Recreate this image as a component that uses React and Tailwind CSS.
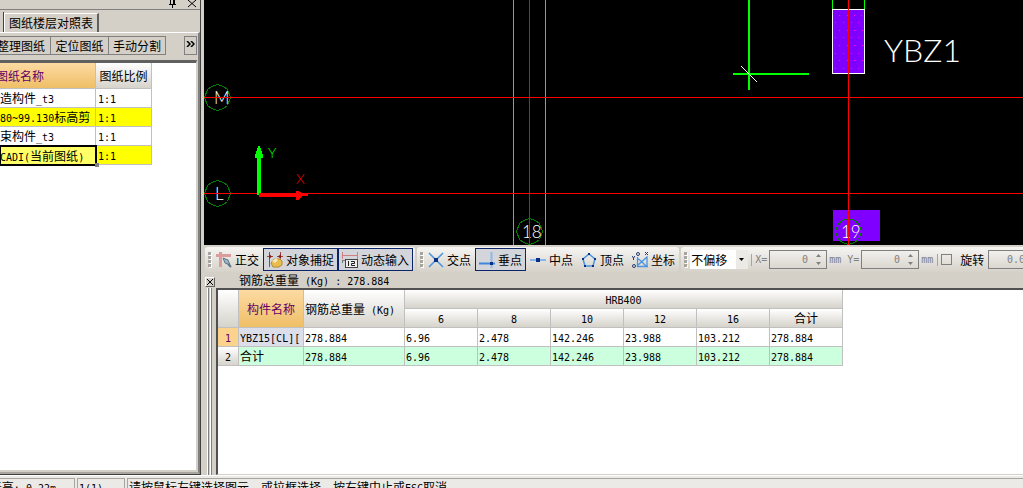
import { useState } from "react";

const drawings = [
  { name: "造构件_t3", scale: "1:1" },
  { name: "80~99.130标高剪", scale: "1:1", marked: true },
  { name: "束构件_t3", scale: "1:1" },
  { name: "CADI(当前图纸)", scale: "1:1", marked: true, current: true },
];

const diameters = ["6", "8", "10", "12", "16", "合计"];

const rows = [
  { name: "YBZ15[CL][", values: ["278.884", "6.96", "2.478", "142.246", "23.988", "103.212", "278.884"] },
  { name: "合计", total: true, values: ["278.884", "6.96", "2.478", "142.246", "23.988", "103.212", "278.884"] },
];

const hatch = [
  [12, 15], [20, 15], [27, 15], [34, 15],
  [8, 22], [16, 22], [24, 22], [31, 22],
  [12, 30], [20, 30], [27, 30], [35, 30],
  [8, 37], [16, 37], [24, 37], [31, 37],
  [12, 45], [20, 45], [27, 45], [35, 45],
  [8, 53], [16, 53], [24, 53], [31, 53],
  [12, 60], [20, 60], [27, 60], [35, 60],
  [8, 68], [16, 68], [24, 68], [31, 68],
];

// Latin characters take half the width of a Chinese one
const Mixed = ({ children }) =>
  children.split(/([\x20-\x7e]+)/).map((part, i) =>
    /^[\x20-\x7e]/.test(part) ? (
      <span key={i} className="font-['DejaVu_Sans_Mono',monospace] text-[10px] leading-none whitespace-pre">{part}</span>
    ) : (
      part
    )
  );

const AxisBubble = ({ cx, cy, label, tx }) => (
  <g>
    <polygon
      points="0,-13 6,-11 10,-8 13,0 10,8 6,11 0,13 -6,11 -10,8 -13,0 -10,-8 -6,-11"
      transform={`translate(${cx} ${cy})`}
      fill="none"
      stroke="#007f00"
    />
    <text x={tx} y={cy + 6} fill="#fff" className="font-['Lato',sans-serif] text-[17px] font-light">{label}</text>
  </g>
);

const CadView = () => (
  <svg className="block w-full h-[245px] bg-black shrink-0" shapeRendering="crispEdges">
    {/* Walls and axes */}
    <path d="M309.5 0V245M341.5 0V245M628.5 0V9M660.5 0V9" stroke="#00ff00" />
    <rect x="629" y="210" width="47" height="31" fill="#7f00ff" />
    <AxisBubble cx={13.5} cy={97.5} label="M" tx={10} />
    <AxisBubble cx={13.5} cy={193.5} label="L" tx={11} />
    <AxisBubble cx={325.5} cy={231.5} label="18" tx={318} />
    <AxisBubble cx={644.5} cy={231.5} label="19" tx={637} />

    {/* Column */}
    <rect x="628.5" y="9.5" width="32" height="64" fill="#7f00ff" stroke="#fff" />
    {hatch.map(([x, y]) => (
      <rect key={`${x}-${y}`} x={x + 623} y={y} width="1" height="1" fill="#ff00ff" />
    ))}
    <text x="680" y="62" fill="#fff" className="font-['Lato',sans-serif] text-[32px] font-light">YBZ1</text>

    <path d="M325.5 0V245M644.5 0V245" stroke="#ff0000" />
    <line x1="0" x2="100%" y1="97.5" y2="97.5" stroke="#ff0000" />
    <line x1="0" x2="100%" y1="193.5" y2="193.5" stroke="#ff0000" />

    {/* Cursor */}
    <path d="M545 0V90M529 74H605" stroke="#00ff00" strokeWidth="2" />
    <path d="M537 66L553 82" stroke="#fff" />

    {/* Coordinate system */}
    <path d="M53 195V158H51V155L54 147V146H56V147L59 155V158H57V195Z" fill="#00ff00" />
    <path d="M55 193H92V191H94L98 193H104V196H98L94 200H92V197H55Z" fill="#ff0000" />
    <text x="64" y="158" fill="#00ff00" className="font-['Lato',sans-serif] text-[14px] font-light">Y</text>
    <text x="92" y="184" fill="#ff0000" className="font-['Lato',sans-serif] text-[14px] font-light">X</text>
  </svg>
);

const Grip = () => (
  <svg width="4" height="16" className="shrink-0">
    {[0, 4, 8, 12].map((y) => (
      <g key={y}>
        <rect x="1" y={y + 1} width="3" height="3" fill="#fff" />
        <rect x="0" y={y} width="3" height="3" fill="#a8a59e" />
      </g>
    ))}
  </svg>
);

const OrthoIcon = () => (
  <svg width="16" height="16">
    <path d="M0 3.5H15M4.5 0V15" stroke="#dc9c9c" strokeWidth="3" />
    <path d="M7 6L12 8L14 13L9 11Z" fill="#9fb4c4" stroke="#5b7688" />
    <path d="M12 12L15 15" stroke="#5b7688" strokeWidth="2" />
  </svg>
);

const SnapIcon = () => (
  <svg width="16" height="16">
    <path d="M2.5 0V15M13.5 0V6M0 4.5H6M10 4.5H16" stroke="#9a4a42" />
    <path d="M2 2L5 4.5L2 7Z M14 2L11 4.5L14 7Z" fill="#8a1c1c" />
    <path d="M4 11L7 7H13L15 9V13L12 15H6Z" fill="#e8bd4c" stroke="#b58a2a" />
    <path d="M5 9L9 6L11 8L8 11Z" fill="#f6e7bb" />
  </svg>
);

const DynamicIcon = () => (
  <svg width="16" height="16">
    <path d="M0.5 0V7M15.5 0V7M0 3.5H16" stroke="#d08080" />
    <path d="M0 8.5H3M0.500 8V11" stroke="#777" />
    <rect x="3.5" y="7.5" width="12" height="8" fill="#eee" stroke="#444" />
    <path d="M6.500 9V14M9 9.500H12.500V11.500H9.500V13.500H13" fill="none" stroke="#222" />
  </svg>
);

const CrossIcon = () => (
  <svg width="16" height="16">
    <path d="M1 1L15 15M15 1L1 15" stroke="#4a94e0" strokeWidth="1.500" />
    <rect x="6" y="6" width="4" height="4" fill="#0c2f86" />
  </svg>
);

const PerpIcon = () => (
  <svg width="16" height="16">
    <path d="M12.500 0V16" stroke="#8fb8e6" strokeWidth="2" />
    <path d="M0 11.500H16" stroke="#3d86dc" strokeWidth="2" />
    <rect x="11" y="10" width="3" height="3" fill="#0c2f86" />
  </svg>
);

const MidIcon = () => (
  <svg width="16" height="16">
    <path d="M0 8H16" stroke="#86b6ea" strokeWidth="2" />
    <rect x="6" y="6" width="4" height="4" fill="#0c2f86" />
  </svg>
);

const VertexIcon = () => (
  <svg width="16" height="16">
    <path d="M8 2L14 7L12 14H4L2 7Z" fill="none" stroke="#4a94e0" strokeWidth="1.500" />
    <path d="M7 1h2v2H7zM1 6h2v2H1zM13 6h2v2h-2zM3 13h2v2H3zM11 13h2v2h-2z" fill="#0c2f86" />
  </svg>
);

const CoordIcon = () => (
  <svg width="16" height="16">
    <path d="M5.500 5V14.500H16M5 6L9 9L14 14M6 13L15 5V14" fill="none" stroke="#4a94e0" strokeWidth="1.300" />
    <path d="M0 4L1.500 6L3 4M1.500 6V8M13 0L16 3M16 0L13 3" stroke="#223c70" fill="none" />
    <circle cx="6" cy="2" r="1.500" fill="none" stroke="#223c70" />
    <circle cx="2" cy="14" r="1.500" fill="none" stroke="#223c70" />
  </svg>
);

const ToolButton = ({ icon, label, active }) => (
  <button
    className={`flex items-center gap-[3px] h-[23px] px-[3px] border ${
      active ? "border-[#0a246a] bg-[#d4d5da]" : "border-transparent"
    }`}
  >
    {icon}
    <span>{label}</span>
  </button>
);

const ToolGroup = ({ children, grow }) => (
  <div
    className={`flex items-center h-[25px] pl-[3px] rounded-[3px] bg-linear-to-b from-[#f6f5f3] to-[#d6d2ca] shrink-0 ${
      grow ? "grow" : ""
    }`}
  >
    <Grip />
    {children}
  </div>
);

const NumberBox = ({ id, label, unit, value, width }) => (
  <>
    {label && (
      <label htmlFor={id} className="w-4 pl-[2px] font-['DejaVu_Sans_Mono',monospace] text-[10px] text-[#808080]">{label}</label>
    )}
    <span className={`flex items-center h-[19px] border border-[#808080] shrink-0 ${width}`}>
      <input
        id={id}
        aria-label={label ? undefined : "旋转角度"}
        defaultValue={value}
        disabled
        className="min-w-0 flex-1 text-right font-['DejaVu_Sans_Mono',monospace] text-[10px] text-[#808080]"
      />
      <svg width="18" height="15" className="shrink-0">
        <path d="M8 5L10.500 2L13 5ZM8 10L10.500 13L13 10Z" fill="#808080" />
      </svg>
    </span>
    {unit && <span className="w-[18px] pl-[2px] font-['DejaVu_Sans_Mono',monospace] text-[10px] text-[#808080]">{unit}</span>}
  </>
);

const SnapToolbar = () => {
  const [offset, setOffset] = useState("不偏移");

  return (
    <div className="flex gap-[2px] pt-[2px] pl-px shrink-0 overflow-hidden">
      <ToolGroup>
        <div className="flex pr-[2px]">
          <ToolButton icon={<OrthoIcon />} label="正交" />
          <ToolButton icon={<SnapIcon />} label="对象捕捉" active />
          <ToolButton icon={<DynamicIcon />} label="动态输入" active />
        </div>
      </ToolGroup>
      <ToolGroup>
        <div className="flex">
          <ToolButton icon={<CrossIcon />} label="交点" />
          <ToolButton icon={<PerpIcon />} label="垂点" active />
          <ToolButton icon={<MidIcon />} label="中点" />
          <ToolButton icon={<VertexIcon />} label="顶点" />
          <ToolButton icon={<CoordIcon />} label="坐标" />
        </div>
      </ToolGroup>
      <ToolGroup grow>
        <div className="relative ml-[2px] w-[58px] h-[19px] bg-white">
          <select
            aria-label="偏移方式"
            value={offset}
            onChange={(e) => setOffset(e.target.value)}
            className="block w-full h-full pl-px appearance-none"
          >
            <option>不偏移</option>
            <option>正交偏移</option>
            <option>极轴偏移</option>
          </select>
          <svg width="12" height="19" className="absolute right-0 top-0 bg-[#eceae6] pointer-events-none">
            <path d="M3 8H8L5.500 11Z" fill="#000" />
          </svg>
        </div>
        <span className="w-px h-3 ml-[3px] mr-px bg-[#a8a59e]" />
        <NumberBox id="offset-x" label="X=" unit="mm" value="0" width="w-[58px]" />
        <NumberBox id="offset-y" label="Y=" unit="mm" value="0" width="w-[58px]" />
        <span className="w-px h-3 mr-[3px] bg-[#a8a59e]" />
        <label className="flex items-center gap-2 pr-1 shrink-0">
          <input type="checkbox" className="appearance-none w-[11px] h-[11px] border border-[#808080]" />
          旋转
        </label>
        <NumberBox id="rotate" value="0.000" width="w-[68px]" />
      </ToolGroup>
    </div>
  );
};

const headCell = "border-r border-b border-[#c0c0c0] bg-linear-to-b from-white to-[#d6d3cb] font-normal p-0";
const keyCell = "border-r border-b border-[#c0c0c0] bg-linear-to-b from-[#fcdaa2] to-[#efbf66] text-[#660066] font-normal p-0";

const DrawingPanel = () => (
  <aside className="w-[201px] shrink-0 flex flex-col border-r border-b border-[#404040]">
    {/* Title bar */}
    <div className="h-[10px] shrink-0 border-b border-[#808080] flex justify-end gap-3 pr-1 overflow-hidden">
      <button aria-label="固定" className="h-2">
        <svg width="7" height="8" className="block"><path d="M1.500 0V4M4.500 0V4M5.500 0V4M0 4.500H7M3.500 5V8" stroke="#000" /></svg>
      </button>
      <button aria-label="关闭" className="h-2">
        <svg width="8" height="8" className="block"><path d="M0 0L8 7M8 0L0 7" stroke="#000" /></svg>
      </button>
    </div>

    {/* Tabs */}
    <div className="flex items-end h-[22px] shrink-0">
      <div className="w-1 h-5 border-r border-[#404040]" />
      <button className="h-[19px] w-[95px] border-l border-t border-l-white border-t-white border-r-2 border-r-[#606060] whitespace-nowrap">
        图纸楼层对照表
      </button>
    </div>

    <div className="flex-1 min-h-0 flex flex-col border-t border-t-white border-r-2 border-r-[#808080] border-b-2 border-b-[#a8a59e]">
      <div className="flex h-[27px] pt-[3px] shrink-0">
        <button className="flex justify-end w-[51px] h-[19px] pr-[5px] border border-l-0 border-[#808080] overflow-hidden whitespace-nowrap items-center">
          <span>整理图纸</span>
        </button>
        <button className="w-[58px] h-[19px] border border-l-0 border-[#808080] leading-none">定位图纸</button>
        <button className="w-[57px] h-[19px] border border-l-0 border-[#808080] leading-none">手动分割</button>
        <button aria-label="更多" className="ml-auto mr-px w-[13px] h-[19px] border border-[#808080] flex justify-center pt-1">
          <svg width="9" height="6"><path d="M1 0L4 3L1 6M5 0L8 3L5 6" fill="none" stroke="#000" strokeWidth="1.500" /></svg>
        </button>
      </div>

      <div className="flex-1 min-h-0 bg-white border-t-[3px] border-t-[#606060] border-r border-b border-[#d4d0c8] mr-px mb-px">
        <table className="table-fixed border-separate border-spacing-0 w-[152px] leading-[14px]">
          <thead>
            <tr className="h-[26px]">
              <th className={`w-[96px] ${keyCell}`}>
                <div className="flex justify-end pr-[51px] whitespace-nowrap overflow-hidden"><span>图纸名称</span></div>
              </th>
              <th className={headCell}>图纸比例</th>
            </tr>
          </thead>
          <tbody>
            {drawings.map((d) => (
              <tr key={d.name} className={`h-[19px] ${d.marked ? "bg-[#ffff00]" : "bg-white"}`}>
                <td
                  className={`relative p-0 h-[19px] whitespace-nowrap ${
                    d.current ? "bg-[#ffff66] outline-2 -outline-offset-1 outline-black" : "border-r border-b border-[#c0c0c0]"
                  }`}
                >
                  <Mixed>{d.name}</Mixed>
                  {d.current && <span className="absolute -right-[3px] -bottom-[2px] w-1 h-1 bg-[#808080]" />}
                </td>
                <td className="p-0 pl-[2px] h-[19px] border-r border-b border-[#c0c0c0]">
                  <Mixed>{d.scale}</Mixed>
                </td>
              </tr>
            ))}
          </tbody>
        </table>
      </div>
    </div>
  </aside>
);

const SteelTable = () => (
  <table className="table-fixed border-separate border-spacing-0 w-[625px] leading-[14px]">
    <colgroup>
      <col className="w-[21px]" />
      <col className="w-[65px]" />
      <col className="w-[101px]" />
      {diameters.map((d) => <col key={d} className="w-[73px]" />)}
    </colgroup>
    <thead>
      <tr className="h-[19px]">
        <th rowSpan={2} className={headCell} />
        <th rowSpan={2} className={keyCell}>构件名称</th>
        <th rowSpan={2} className={`${headCell} text-left pl-px whitespace-nowrap`}><Mixed>钢筋总重量 (Kg)</Mixed></th>
        <th colSpan={6} className={headCell}><Mixed>HRB400</Mixed></th>
      </tr>
      <tr className="h-[19px]">
        {diameters.map((d) => <th key={d} className={headCell}><Mixed>{d}</Mixed></th>)}
      </tr>
    </thead>
    <tbody>
      {rows.map((row, i) => (
        <tr key={row.name} className={`h-[19px] ${row.total ? "bg-[#ccffdd]" : "bg-white"}`}>
          <th className={row.total ? headCell : "border-r border-b border-[#c0c0c0] bg-[#fcd38c] text-[#660066] font-normal p-0"}>
            <Mixed>{String(i + 1)}</Mixed>
          </th>
          <td className={`p-0 pl-px border-r border-b border-[#c0c0c0] whitespace-nowrap ${row.total ? "" : "bg-[#dcdeea]"}`}>
            <Mixed>{row.name}</Mixed>
          </td>
          {row.values.map((v, j) => (
            <td key={j} className="p-0 pl-px border-r border-b border-[#c0c0c0]"><Mixed>{v}</Mixed></td>
          ))}
        </tr>
      ))}
    </tbody>
  </table>
);

const StatusBar = () => (
  <footer className="flex gap-[2px] h-[13px] pt-[2px] shrink-0 overflow-hidden border-t border-white whitespace-nowrap bg-[#eceae6]">
    <div className="w-[75px] h-5 shrink-0 border-t border-r border-[#a8a59e] flex justify-end pr-[18px] overflow-hidden">
      <span><Mixed>标高:-0.22m</Mixed></span>
    </div>
    <div className="w-12 h-5 shrink-0 border border-[#a8a59e] pl-px"><Mixed>1(1)</Mixed></div>
    <div className="flex-1 h-5 border-l border-t border-[#a8a59e] pl-px">
      <Mixed>请按鼠标左键选择图元，或拉框选择，按右键中止或ESC取消</Mixed>
    </div>
  </footer>
);

export default function App() {
  return (
    <div className="h-screen flex flex-col overflow-hidden bg-[#d4d0c8] text-black text-[12px] leading-4 font-['Noto_Sans_CJK_SC',sans-serif]">
      <main className="flex-1 min-h-0 flex gap-[3px]">
        <DrawingPanel />
        <section className="flex-1 min-w-0 flex flex-col">
          <CadView />
          <SnapToolbar />

          {/* Steel summary */}
          <div className="flex items-center h-4 pl-px shrink-0">
            <button aria-label="关闭" className="w-[10px] h-[10px] mt-1 border border-white border-r-[#606060] border-b-[#606060]">
              <svg width="8" height="8" className="block"><path d="M1 1L7 7M7 1L1 7" stroke="#000" /></svg>
            </button>
            <h2 className="ml-6"><Mixed>钢筋总重量 (Kg) : 278.884</Mixed></h2>
          </div>
          <div className="flex-1 min-h-0 flex">
            <div className="flex w-3 pl-[3px] gap-px shrink-0">
              <span className="w-[2px] border-l border-white border-r border-r-[#808080]" />
              <span className="w-[2px] border-l border-white border-r border-r-[#808080]" />
            </div>
            <div className="flex-1 min-w-0 bg-white border-l-2 border-t-2 border-[#505050] border-b border-b-[#d4d0c8]">
              <SteelTable />
            </div>
          </div>
        </section>
      </main>
      <StatusBar />
    </div>
  );
}
